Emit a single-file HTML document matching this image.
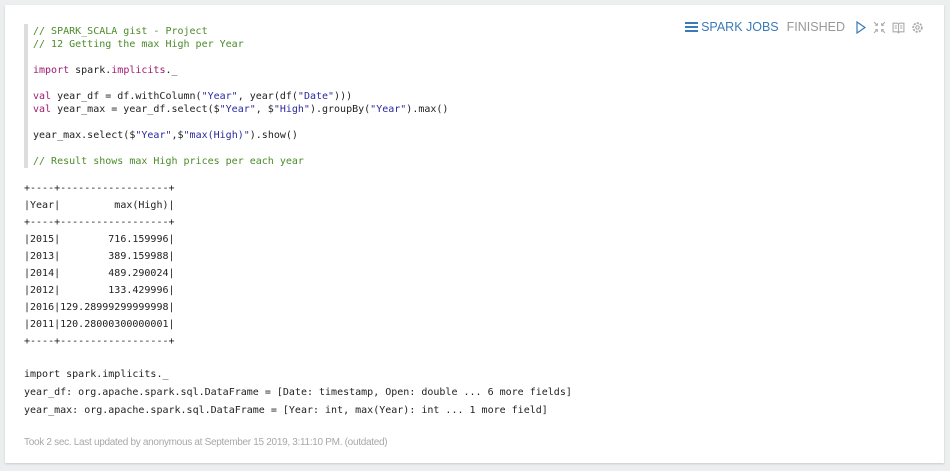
<!DOCTYPE html>
<html><head><style>
body{margin:0;background:#eceeef;width:950px;height:471px;overflow:hidden;font-family:"Liberation Sans",sans-serif}
.card{position:absolute;left:5px;top:5px;width:939px;height:458px;background:#fff;box-shadow:0 1px 2px rgba(0,0,0,.15)}
.code{position:absolute;left:19px;top:19px;border-left:4px solid #ddd;padding-left:5px;padding-top:1px;height:143px}
pre{margin:0;font-family:"DejaVu Sans Mono","Liberation Mono",monospace;font-size:10px;color:#222}
.code pre{line-height:13px}
.c{color:#4b8b29}.k{color:#a01a72}.s{color:#2a2a9f}
.out{position:absolute;left:19px;top:175px;line-height:17px}
.out2{position:absolute;left:19px;top:361px;line-height:18px}
.foot{position:absolute;left:19px;top:432px;font-size:10px;color:#a8a8a8;letter-spacing:-.3px}
.tb{position:absolute;right:20px;top:15px;font-size:12.5px;color:#3a7ab8;display:flex;align-items:center;gap:6px}
.tb .f{color:#999;margin-left:2px}
</style></head><body>
<div class="card">
<div class="code"><pre><span class="c">// SPARK_SCALA gist - Project
// 12 Getting the max High per Year</span>

<span class="k">import</span> spark.<span class="k">implicits</span>._

<span class="k">val</span> year_df = df.withColumn(<span class="s">"Year"</span>, year(df(<span class="s">"Date"</span>)))
<span class="k">val</span> year_max = year_df.select($<span class="s">"Year"</span>, $<span class="s">"High"</span>).groupBy(<span class="s">"Year"</span>).max()

year_max.select($<span class="s">"Year"</span>,$<span class="s">"max(High)"</span>).show()

<span class="c">// Result shows max High prices per each year</span></pre></div>
<pre class="out">+----+------------------+
|Year|         max(High)|
+----+------------------+
|2015|        716.159996|
|2013|        389.159988|
|2014|        489.290024|
|2012|        133.429996|
|2016|129.28999299999998|
|2011|120.28000300000001|
+----+------------------+</pre>
<pre class="out2">import spark.implicits._
year_df: org.apache.spark.sql.DataFrame = [Date: timestamp, Open: double ... 6 more fields]
year_max: org.apache.spark.sql.DataFrame = [Year: int, max(Year): int ... 1 more field]</pre>
<div class="foot">Took 2 sec. Last updated by anonymous at September 15 2019, 3:11:10 PM. (outdated)</div>
<div class="tb">
<svg width="13" height="10" viewBox="0 0 13 10"><rect x="0" y="0" width="13" height="2" fill="#3a7ab8"/><rect x="0" y="4" width="13" height="2" fill="#3a7ab8"/><rect x="0" y="8" width="13" height="2" fill="#3a7ab8"/></svg>
<span style="margin-left:-3px">SPARK JOBS</span><span class="f">FINISHED</span>
<svg width="12" height="13" viewBox="0 0 12 13" style="margin-left:4px"><path d="M2 1L10 6.5L2 12Z" fill="none" stroke="#3a7ab8" stroke-width="1.2"/></svg>
<svg width="13" height="13" viewBox="0 0 12 12"><path d="M1 1L4 4M4 2V4H2M11 1L8 4M8 2V4H10M1 11L4 8M4 10V8H2M11 11L8 8M8 10V8H10" fill="none" stroke="#aaa" stroke-width="1"/></svg>
<svg width="13" height="13" viewBox="0 0 12 12"><path d="M1 2H5L6 3L7 2H11V10H7L6 11L5 10H1Z M6 3V11 M2.5 4.5H4.5M2.5 6.5H4.5M7.5 4.5H9.5M7.5 6.5H9.5" fill="none" stroke="#aaa" stroke-width="1"/></svg>
<svg width="13" height="13" viewBox="0 0 12 12"><circle cx="6" cy="6" r="4" fill="none" stroke="#aaa" stroke-width="1.6" stroke-dasharray="2 1"/><circle cx="6" cy="6" r="1.6" fill="none" stroke="#aaa"/></svg>
</div>
</div>
</body></html>
